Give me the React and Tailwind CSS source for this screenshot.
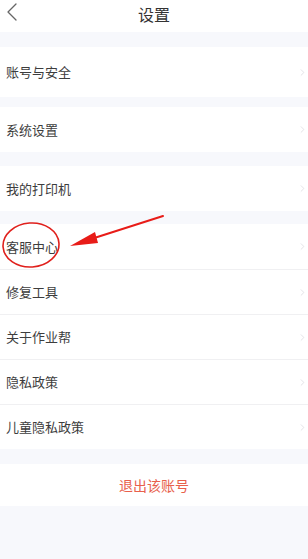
import { ChevronRight } from "lucide-react";

const font = { fontFamily: '"Noto Sans CJK SC", "Noto Sans", sans-serif' };

const Row = ({ label, h = "h-[45px]", divider = false }) => (
  <div
    className={`${h} flex items-center justify-between bg-white pl-[6px] pr-0 ${
      divider ? "border-t border-[#f0f0f2]" : ""
    }`}
  >
    <span className="text-[13px] text-[#3d3d3d]">{label}</span>
    <ChevronRight className="h-[11px] w-[11px] text-[#d6d6da]" strokeWidth={1.5} />
  </div>
);

const App = () => {
  return (
    <div className="relative min-h-[559px] w-[308px] overflow-hidden bg-[#f7f8fc]" style={font}>
      {/* header */}
      <header className="relative flex h-[32px] items-start justify-center bg-white pt-[3px]">
        <svg className="absolute left-0 top-0" width="24" height="24" viewBox="0 0 24 24">
          <polyline points="16,4 8,12 16,20" fill="none" stroke="#666" strokeWidth="1.3" strokeLinejoin="round" strokeLinecap="round" />
        </svg>
        <span className="text-[16px] leading-[22px] text-[#333]">设置</span>
      </header>

      <div className="h-[15px]" />
      <Row label="账号与安全" h="h-[50px]" />
      <div className="h-[10px]" />
      <Row label="系统设置" />
      <div className="h-[14px]" />
      <Row label="我的打印机" />
      <div className="h-[13px]" />

      <div className="bg-white">
        <Row label="客服中心" />
        <Row label="修复工具" divider />
        <Row label="关于作业帮" divider />
        <Row label="隐私政策" divider />
        <Row label="儿童隐私政策" divider />
      </div>

      <div className="h-[15px]" />
      <div className="flex h-[42px] items-center justify-center bg-white">
        <span className="text-[14px] text-[#e8604c]">退出该账号</span>
      </div>

      {/* red annotation */}
      <svg className="pointer-events-none absolute left-0 top-[205px]" width="180" height="70" viewBox="0 0 180 70">
        <ellipse cx="31" cy="40" rx="28" ry="22" fill="none" stroke="#e0201c" strokeWidth="1.6" transform="rotate(-4 31 40)" />
        <line x1="163" y1="11" x2="88" y2="35" stroke="#e81c18" strokeWidth="2" strokeLinecap="round" />
        <polygon points="70,41 95,27 98,38" fill="#e81c18" />
      </svg>
    </div>
  );
};

export default App;
